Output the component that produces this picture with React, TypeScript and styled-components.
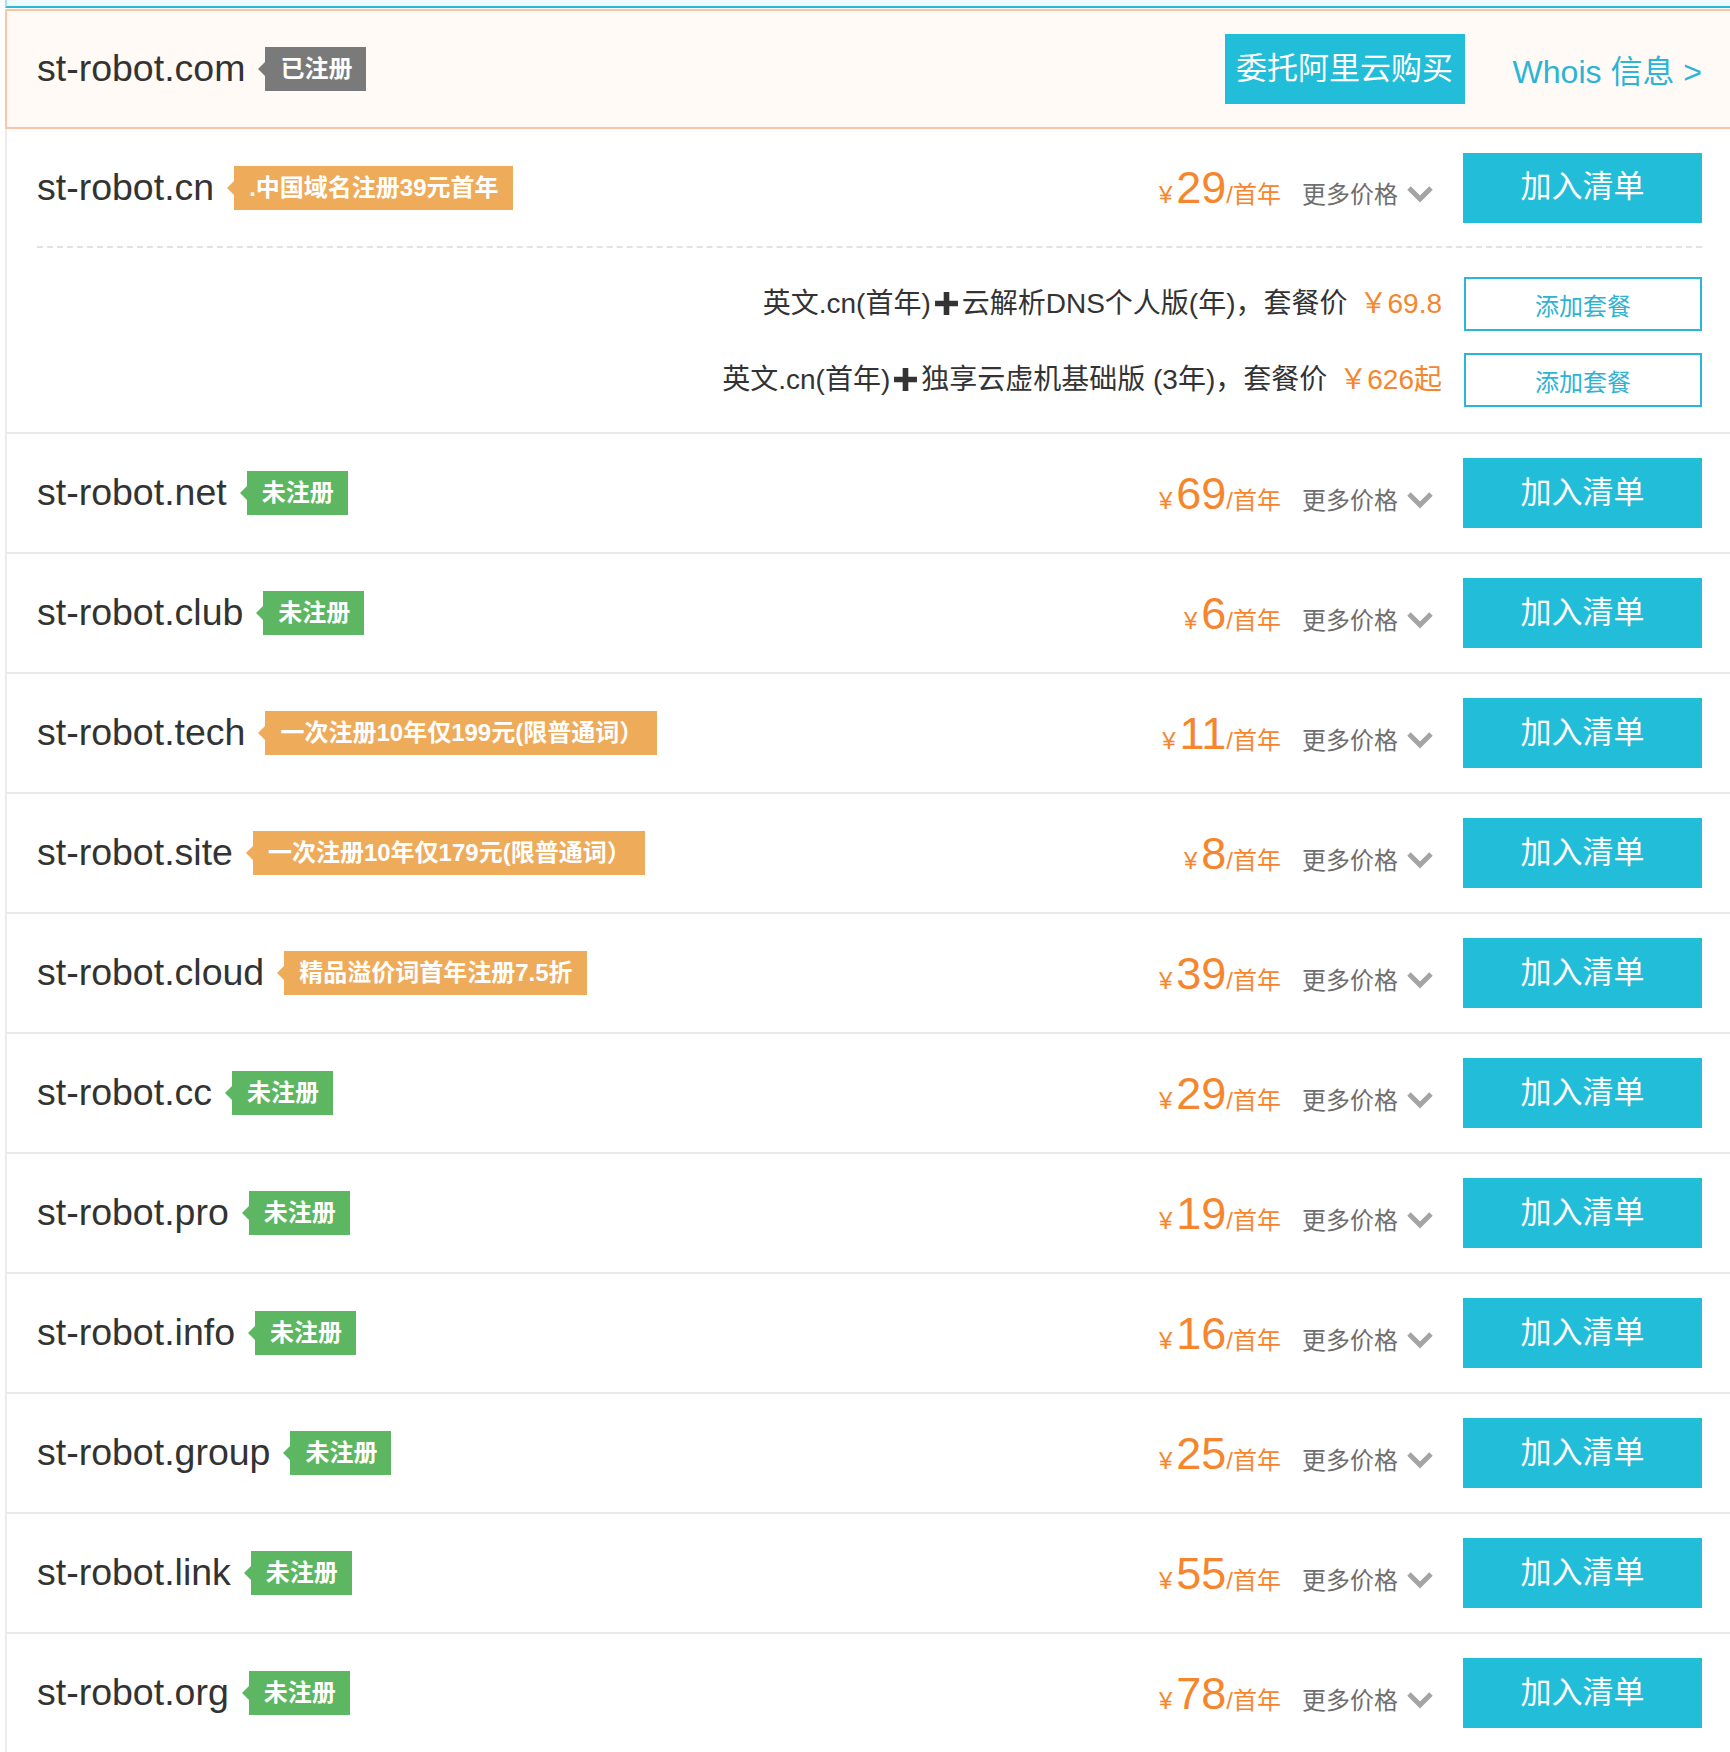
import React from "react";
import styled, { createGlobalStyle, css } from "styled-components";

const GlobalStyle = createGlobalStyle`
  html, body { margin: 0; padding: 0; background: #fff; }
  body {
    font-family: "Liberation Sans", "Noto Sans CJK SC", Arial, sans-serif;
    color: #333;
    overflow-x: hidden;
  }
  * { box-sizing: border-box; }
`;

const tones = {
  gray: "#7a7a7a",
  green: "#5db661",
  orange: "#eeab5a",
} as const;
type Tone = keyof typeof tones;

const Page = styled.div`
  width: 1730px;
  padding-left: 5px;
`;

const TopStrip = styled.div`
  height: 8px;
  background: #effafd;
  border-left: 2px solid #a9e0ee;
  border-bottom: 2px solid #2db8d6;
  margin-bottom: 1px;
`;

const RowBox = styled.div<{ $registered?: boolean }>`
  border-left: 2px solid #ebebeb;
  border-bottom: 2px solid #e9e9e9;
  ${(p) =>
    p.$registered &&
    css`
      background: #fffaf5;
      border: 2px solid #f7c5a7;
      border-right: none;
    `}
`;

const MainLine = styled.div<{ $h: number }>`
  display: flex;
  align-items: center;
  height: ${(p) => p.$h}px;
  padding: 0 28px 0 30px;
`;

const Domain = styled.span`
  font-size: 37.5px;
  line-height: 1;
  color: #333;
  white-space: nowrap;
`;

const Badge = styled.span<{ $tone: Tone }>`
  position: relative;
  margin-left: 20px;
  height: 44px;
  line-height: 44px;
  padding: 0 14px 0 15px;
  font-size: 24px;
  font-weight: 700;
  color: #fff;
  white-space: nowrap;
  background: ${(p) => tones[p.$tone]};
  &::before {
    content: "";
    position: absolute;
    left: -7px;
    top: 15px;
    border-top: 7px solid transparent;
    border-bottom: 7px solid transparent;
    border-right: 7px solid ${(p) => tones[p.$tone]};
  }
`;

const Spacer = styled.div`
  flex: 1;
`;

const PriceLine = styled.div`
  display: flex;
  align-items: baseline;
  white-space: nowrap;
`;

const Price = styled.span`
  display: flex;
  align-items: baseline;
  color: #f5862d;
`;

const Yen = styled.span`
  font-size: 24px;
  margin-right: 4px;
`;

const Amount = styled.span`
  font-size: 45px;
  line-height: 1;
`;

const Unit = styled.span`
  font-size: 24px;
`;

const More = styled.span`
  display: flex;
  align-items: baseline;
  margin-left: 21px;
  font-size: 24px;
  color: #6e6e6e;
  svg {
    margin-left: 8px;
  }
`;

const CyanButton = styled.button`
  flex: none;
  width: 239px;
  height: 70px;
  border: none;
  background: #21bdd9;
  color: #fff;
  font-family: "Liberation Sans", "Noto Sans CJK SC", sans-serif;
  font-size: 31px;
  line-height: 1;
  padding: 0 0 2px;
  cursor: pointer;
`;

const AddButton = styled(CyanButton)`
  margin-left: 29px;
`;

const EntrustButton = styled(CyanButton)`
  width: 240px;
`;

const Whois = styled.a`
  margin-left: 48px;
  font-size: 32px;
  color: #2bb4d6;
  text-decoration: none;
  white-space: nowrap;
`;

const Divider = styled.div`
  margin: 0 28px 0 30px;
  border-top: 2px dashed #e2e2e2;
`;

const PackageList = styled.div`
  display: flex;
  flex-direction: column;
  gap: 22px;
  padding: 29px 28px 25px 30px;
`;

const PackageItem = styled.div`
  display: flex;
  justify-content: flex-end;
  align-items: center;
`;

const PackText = styled.span`
  display: flex;
  align-items: center;
  font-size: 28px;
  line-height: 1;
  color: #333;
  white-space: nowrap;
  padding-bottom: 1px;
  svg {
    margin: 0 3px;
  }
`;

const PackPrice = styled.span`
  margin-left: 12px;
  color: #f5862d;
`;

const PackButton = styled.button`
  flex: none;
  margin-left: 22px;
  width: 238px;
  height: 54px;
  background: #fff;
  border: 2px solid #2ab6d6;
  color: #2fb3d3;
  font-family: "Liberation Sans", "Noto Sans CJK SC", sans-serif;
  font-size: 24px;
  padding: 0;
  cursor: pointer;
`;

const Chevron = () => (
  <svg width="28" height="18" viewBox="0 0 28 18">
    <polyline
      points="3,3 14,14 25,3"
      fill="none"
      stroke="#a4a4a4"
      strokeWidth="5"
    />
  </svg>
);

const Plus = () => (
  <svg width="25" height="25" viewBox="0 0 24 24">
    <path d="M9.3 1h5.4v8.3H23v5.4h-8.3V23H9.3v-8.3H1V9.3h8.3z" fill="#333" />
  </svg>
);

type DomainRow = {
  name: string;
  badge: string;
  tone: Tone;
  price: string;
};

const rows: DomainRow[] = [
  { name: "st-robot.net", badge: "未注册", tone: "green", price: "69" },
  { name: "st-robot.club", badge: "未注册", tone: "green", price: "6" },
  {
    name: "st-robot.tech",
    badge: "一次注册10年仅199元(限普通词）",
    tone: "orange",
    price: "11",
  },
  {
    name: "st-robot.site",
    badge: "一次注册10年仅179元(限普通词）",
    tone: "orange",
    price: "8",
  },
  {
    name: "st-robot.cloud",
    badge: "精品溢价词首年注册7.5折",
    tone: "orange",
    price: "39",
  },
  { name: "st-robot.cc", badge: "未注册", tone: "green", price: "29" },
  { name: "st-robot.pro", badge: "未注册", tone: "green", price: "19" },
  { name: "st-robot.info", badge: "未注册", tone: "green", price: "16" },
  { name: "st-robot.group", badge: "未注册", tone: "green", price: "25" },
  { name: "st-robot.link", badge: "未注册", tone: "green", price: "55" },
  { name: "st-robot.org", badge: "未注册", tone: "green", price: "78" },
];

const packages = [
  { before: "英文.cn(首年)", after: "云解析DNS个人版(年)，套餐价", price: "￥69.8" },
  { before: "英文.cn(首年)", after: "独享云虚机基础版 (3年)，套餐价", price: "￥626起" },
];

const PriceBlock = ({ price }: { price: string }) => (
  <PriceLine>
    <Price>
      <Yen>¥</Yen>
      <Amount>{price}</Amount>
      <Unit>/首年</Unit>
    </Price>
    <More>
      更多价格
      <Chevron />
    </More>
  </PriceLine>
);

export default function App() {
  return (
    <Page>
      <GlobalStyle />
      <TopStrip />
      <RowBox $registered>
        <MainLine $h={116}>
          <Domain>st-robot.com</Domain>
          <Badge $tone="gray">已注册</Badge>
          <Spacer />
          <EntrustButton>委托阿里云购买</EntrustButton>
          <Whois href="#">Whois 信息 &gt;</Whois>
        </MainLine>
      </RowBox>

      <RowBox>
        <MainLine $h={117}>
          <Domain>st-robot.cn</Domain>
          <Badge $tone="orange">.中国域名注册39元首年</Badge>
          <Spacer />
          <PriceBlock price="29" />
          <AddButton>加入清单</AddButton>
        </MainLine>
        <Divider />
        <PackageList>
          {packages.map((p, i) => (
            <PackageItem key={i}>
              <PackText>
                {p.before}
                <Plus />
                {p.after}
                <PackPrice>{p.price}</PackPrice>
              </PackText>
              <PackButton>添加套餐</PackButton>
            </PackageItem>
          ))}
        </PackageList>
      </RowBox>

      {rows.map((r) => (
        <RowBox key={r.name}>
          <MainLine $h={118}>
            <Domain>{r.name}</Domain>
            <Badge $tone={r.tone}>{r.badge}</Badge>
            <Spacer />
            <PriceBlock price={r.price} />
            <AddButton>加入清单</AddButton>
          </MainLine>
        </RowBox>
      ))}
    </Page>
  );
}
